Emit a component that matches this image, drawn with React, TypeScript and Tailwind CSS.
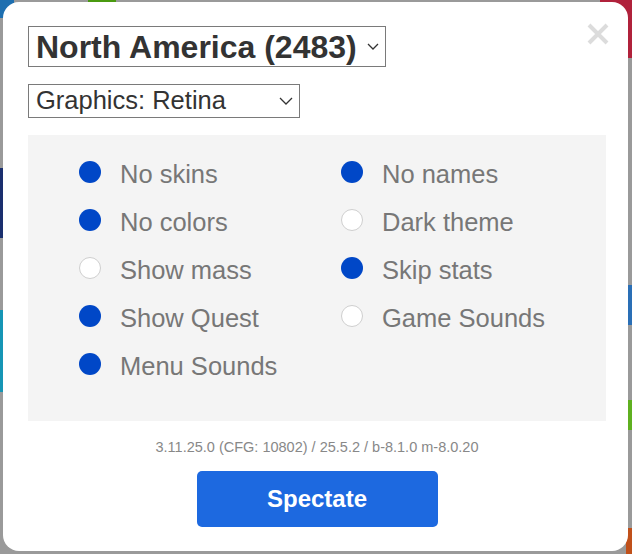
import React from "react";

const opts: [string, boolean][] = [
  ["No skins", true],
  ["No names", true],
  ["No colors", true],
  ["Dark theme", false],
  ["Show mass", false],
  ["Skip stats", true],
  ["Show Quest", true],
  ["Game Sounds", false],
  ["Menu Sounds", true],
];

function Chevron({ w, h }: { w: number; h: number }) {
  return (
    <svg width={w} height={h} viewBox={`0 0 ${w} ${h}`} fill="none">
      <path
        d={`M1 1 L${w / 2} ${h - 1} L${w - 1} 1`}
        stroke="#333"
        strokeWidth="1.3"
      />
    </svg>
  );
}

export default function App() {
  return (
    <div className="relative w-[632px] h-[554px] overflow-hidden bg-[#9a9a9a] font-['Liberation_Sans',Arial,sans-serif]">
      {/* background game bits */}
      <div className="absolute left-0 top-0 w-[14px] h-[18px] bg-[#1e6fb0]" />
      <div className="absolute left-[88px] top-0 w-[28px] h-[6px] bg-[#4a9a10]" />
      <div className="absolute left-[600px] top-0 w-[32px] h-[58px] bg-[#b0213b]" />
      <div className="absolute left-0 top-[168px] w-[6px] h-[70px] bg-[#1a2f6e]" />
      <div className="absolute left-0 top-[310px] w-[6px] h-[82px] bg-[#1595b5]" />
      <div className="absolute left-[626px] top-[285px] w-[6px] h-[40px] bg-[#2a6fb6]" />
      <div className="absolute left-[626px] top-[400px] w-[6px] h-[30px] bg-[#5fb020]" />
      <div className="absolute left-[626px] top-[528px] w-[6px] h-[26px] bg-[#c0501a]" />

      <div className="relative ml-[3px] mt-[2px] w-[625px] h-[549px] rounded-[16px] bg-white pl-[25px] pt-[24px]">
        <svg
          className="absolute right-[19px] top-[21px]"
          width="22"
          height="22"
          viewBox="0 0 22 22"
        >
          <path d="M2 2 L20 20 M20 2 L2 20" stroke="#dcdcdc" strokeWidth="4" />
        </svg>

        <div className="flex items-center justify-between w-[358px] h-[41px] border border-[#7a7a7a] pl-[7px] pr-[6px]">
          <span className="text-[32px] font-bold leading-none text-[#333]">
            North America (2483)
          </span>
          <Chevron w={12} h={7} />
        </div>

        <div className="mt-[17px] flex items-center justify-between w-[272px] h-[34px] border border-[#7a7a7a] pl-[7px] pr-[6px]">
          <span className="text-[25.5px] leading-none text-[#333]">
            Graphics: Retina
          </span>
          <Chevron w={14} h={8} />
        </div>

        <div className="mt-[17px] w-[578px] h-[286px] bg-[#f4f4f4] pl-[51px] pt-[16px]">
          <div className="grid grid-cols-[262px_1fr]">
            {opts.map(([label, on]) => (
              <div key={label} className="flex items-center h-12">
                <div
                  className={
                    on
                      ? "w-[22px] h-[22px] rounded-full bg-[#0047c7] mb-[7px] shrink-0"
                      : "w-[22px] h-[22px] rounded-full bg-white border-[1.5px] border-[#cfcfcf] mb-[7px] shrink-0"
                  }
                />
                <span className="ml-[19px] text-[25.5px] leading-none text-[#777]">
                  {label}
                </span>
              </div>
            ))}
          </div>
        </div>

        <div className="w-[578px] mt-[18px] text-center text-[14.5px] leading-4 text-[#888]">
          3.11.25.0 (CFG: 10802) / 25.5.2 / b-8.1.0 m-8.0.20
        </div>

        <div className="w-[578px] flex justify-center mt-[16px]">
          <button className="w-[241px] h-[56px] rounded-[5px] bg-[#1d69e0] text-white text-[24px] font-bold">
            Spectate
          </button>
        </div>
      </div>
    </div>
  );
}
